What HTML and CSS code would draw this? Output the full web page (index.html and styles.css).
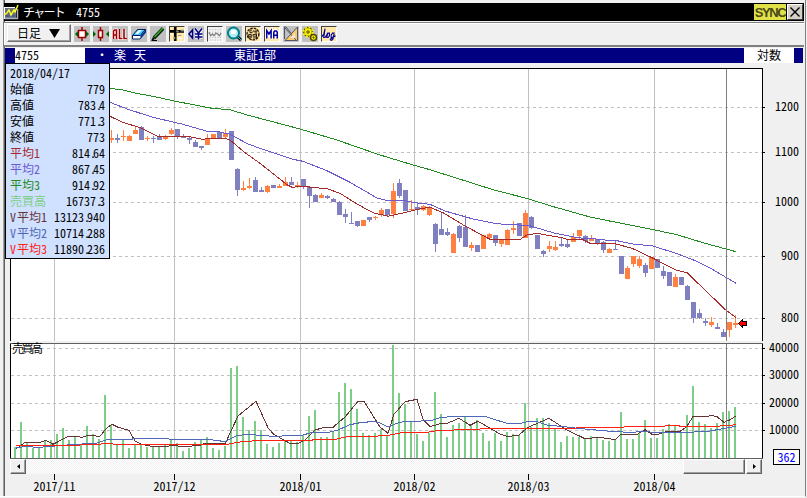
FILE: index.html
```html
<!DOCTYPE html>
<html lang="ja">
<head>
<meta charset="utf-8">
<title>チャート 4755</title>
<link rel="stylesheet" href="styles.css">
</head>
<body>
<div class="window">
  <header class="titlebar">
    <svg class="app-icon" width="16" height="16" viewBox="0 0 16 16"><path d="M1 4h11v11h-11z" fill="#687080"/><path d="M1 3.500h10M.5 3v12" stroke="#fff"/><path d="M1 14.500h12.500V5" fill="none" stroke="#aab0bb" stroke-width="1.500"/><path d="M2 12h9M2 9h9" stroke="#3848a0"/><path d="M0 11l3-2 2-3 2 5 3-5 1 2 3-7" fill="none" stroke="#ffff20" stroke-width="1.500"/></svg>
    <span class="title-name">チャート</span><span class="title-code">4755</span>
    <span class="sync">SYNC</span>
    <span class="close"><svg width="12" height="12" viewBox="0 0 12 12"><path d="M1.500 1.500l9 9M10.500 1.500l-9 9" stroke="#000" stroke-width="1.400"/></svg></span>
  </header>

  <nav class="toolbar">
    <div class="period"><span>日足</span><svg width="11" height="9" viewBox="0 0 12 9" preserveAspectRatio="none"><path d="M0 0h12L6 9z"/></svg></div>
    <div class="tools">
      <svg class="tool" viewBox="0 0 16 16"><path d="M8 1v14" stroke="#a00000" stroke-width="1.500"/><path d="M4.500 4.500h7v7h-7z" fill="#fff" stroke="#a00000" stroke-width="1.500"/><path d="M4 5v6L1 8zM12 5v6l3-3z" fill="#006000"/></svg>
      <svg class="tool" viewBox="0 0 16 16"><path d="M7.500 1v14" stroke="#a00000" stroke-width="1.500"/><path d="M5.500 4.500h4v7h-4z" fill="#fff" stroke="#a00000" stroke-width="1.500"/><path d="M0 5v6l3-3zM16 5v6l-3-3z" fill="#006000"/></svg>
      <svg class="tool" viewBox="0 0 16 16"><path d="M1.500 13V5l1-1h2v9M1.500 9h3M7.500 3.500v9h3M12 3.500v9h3" fill="none" stroke="#fff" stroke-width="3"/><path d="M1.500 13V5l1-1h2v9M1.500 9h3M7.500 3v9.500h3M12 3v9.500h3" fill="none" stroke="#a00000" stroke-width="1.600"/></svg>
      <svg class="tool" viewBox="0 0 16 16"><path d="M1.500 9.500l5-6h8l-5 6z" fill="#30c8f8" stroke="#002060"/><path d="M1.500 9.500v3.500h7.500l5.500-6.500v-3l-5 6z" fill="#fff" stroke="#002060"/><path d="M9.500 10l5-6v2.500l-5 6z" fill="#0030a0"/><path d="M4 8l4-4h3L7 8z" fill="#fff"/></svg>
      <svg class="tool" viewBox="0 0 16 16"><path d="M4 12L13 2.500" stroke="#002000" stroke-width="3.500"/><path d="M4.500 11L13 2" stroke="#30a030" stroke-width="1.800"/><path d="M1 15l2-4 2 2z"/><path d="M2 14.500h5" stroke="#000"/></svg>
      <svg class="tool on" viewBox="0 0 16 16"><path d="M0 5h16M6 0v16" stroke="#000" stroke-width="3"/><path d="M7 5h3M12 4h4" stroke="#888" stroke-width="2"/><path d="M4 11h2v3H4zM9 9h4v1H9z" fill="#888"/><path d="M1 8h2M9 13h5" stroke="#fff" stroke-width="2"/></svg>
      <svg class="tool" viewBox="0 0 16 16"><path d="M1 8l3.500-4v8z" fill="#fff" stroke="#000080" stroke-width="1.500"/><path d="M7 3l3.500 4L14 3M10.500 7v6.500M7 8h7.500M7 11h7.500" fill="none" stroke="#fff" stroke-width="3"/><path d="M7 2.500l3.500 4.500L14 2.500M10.500 7v6.500M7 8h7.500M7 11h7.500" fill="none" stroke="#000080" stroke-width="1.600"/></svg>
      <svg class="tool faded" viewBox="0 0 16 16"><path d="M2 3h13M2 6h13M2 12h13M2 15h13" stroke="#aaa" stroke-dasharray="1 2"/><path d="M1 6l2 4 2-2 2 2 2-3 2 1 2 2 2-3" fill="none" stroke="#808080" stroke-width="1.500"/></svg>
      <svg class="tool" viewBox="0 0 16 16"><path d="M11 10l4 4" stroke="#000" stroke-width="3"/><path d="M12 11l3 3" stroke="#00d0d0"/><circle cx="7.500" cy="7" r="5.500" fill="#b0f0f8" stroke="#008088" stroke-width="2"/><path d="M5 4h5v4H5z" fill="#fff"/></svg>
      <svg class="tool on" viewBox="0 0 16 16"><circle cx="8" cy="8" r="6.800" fill="#f5dfa0" stroke="#201000" stroke-width="1.500" stroke-dasharray="3 1"/><path d="M7 3.500H4.500v3H7v-1.500M9 3.500v2h3M11.500 3v5M3 8.500h3v4H3zM3 10.500h3M8 8.500h4v2H8zM12 8.500v4H8" fill="none" stroke="#201000"/></svg>
      <svg class="tool on" viewBox="0 0 16 16"><path d="M2 13V4l2.500 4L7 4v9M10 13V6l2-2 2 2v7M10 9h4" fill="none" stroke="#fff" stroke-width="3.500"/><path d="M2 13V4l2.500 4L7 4v9M10 13V6l1-1.500h2L14 6v7M10 9.500h4" fill="none" stroke="#0000a0" stroke-width="1.700"/></svg>
      <svg class="tool" viewBox="0 0 16 16"><path d="M14 2v12H2z" fill="#ffc868"/><path d="M14.500 1v13.500H2zM2 2l11 12M1.500 1v12M1 1h2l5 6" fill="none" stroke="#505868"/><path d="M12 7v5H7z" fill="#e8e8e8"/></svg>
      <svg class="tool" viewBox="0 0 16 16"><circle cx="6" cy="6" r="4.300" fill="#f8f000" stroke="#504800" stroke-width="1.300"/><circle cx="6" cy="6" r="4.600" fill="none" stroke="#f8f000" stroke-width="1.800" stroke-dasharray="2 1.600"/><circle cx="11.500" cy="11.500" r="3" fill="#f8f000" stroke="#504800" stroke-width="1.500"/><path d="M5 5h2v2H5zM11 11h1v1h-1z" fill="#fff" stroke="#504800"/></svg>
      <svg class="tool on" viewBox="0 0 16 16"><path d="M0 11l2-3 1.500-6L2 12h1.500l2-3 1-2h2v3l-1.500 2H5.500l1-5M14.500 7h-2.500l-1.500 2v3h2l1.500-4-1.500 6-2 1.500-1-1.500 3-2 3-2" fill="none" stroke="#0000a0" stroke-width="1.300"/></svg>
    </div>
  </nav>

  <div class="infobar">
    <span class="code">4755</span><span class="dot">・</span><span class="name">楽 天</span><span class="market">東証1部</span><span class="scale">対数</span>
  </div>

  <main class="chart">
    <div class="plot-column">
      <svg class="plot" width="760" height="396" viewBox="5 63 760 396" shape-rendering="crispEdges">
        <path d="M10 68h753v273H10z" fill="#fff"/>
        <path d="M10 343h753v116H10z" fill="#fff"/>
        <g id="grid"></g>
        <g id="volume"></g>
        <g id="candles"></g>
        <g id="lines"></g>
        <path class="cursor" d="M726.500 69v389"/>
        <path class="gap" d="M11 341h751v2H11z"/>
        <path class="frame" d="M10 68.500h753M10.500 68v273M762.500 68v273M10.500 343v116M762.500 343v116"/>
        <path class="frame-gray" d="M10 343.500h753M10 458.500h753"/>
        <path d="M738.500 323.500l4-4v2h4v4h-4v2z" fill="#f00" stroke="#000"/>
        <text x="12" y="353" textLength="31">売買高</text>
      </svg>
      <div class="scrollbar">
        <span class="arrow"><svg width="3" height="5" viewBox="0 0 3 5"><path d="M3 0v5L0 2.500z"/></svg></span>
        <span class="thumb"></span>
        <span class="arrow"><svg width="3" height="5" viewBox="0 0 3 5"><path d="M0 0v5l3-2.500z"/></svg></span>
      </div>
      <svg id="dates" width="760" height="22" viewBox="5 474 760 22"></svg>
    </div>
    <div class="value-column">
      <svg id="values" width="40" height="386" viewBox="765 63 40 386"></svg>
      <span class="count">362</span>
    </div>
    <dl class="quote">
      <div><dt>2018/04/17</dt></div>
      <div><dt>始値</dt><dd>779</dd></div>
      <div><dt>高値</dt><dd>783<i>.</i>4</dd></div>
      <div><dt>安値</dt><dd>771<i>.</i>3</dd></div>
      <div><dt>終値</dt><dd>773</dd></div>
      <div><dt class="short">平均1</dt><dd>814<i>.</i>64</dd></div>
      <div><dt class="mid">平均2</dt><dd>867<i>.</i>45</dd></div>
      <div><dt class="long">平均3</dt><dd>914<i>.</i>92</dd></div>
      <div><dt class="vol">売買高</dt><dd>16737<i>.</i>3</dd></div>
      <div><dt class="v1"><b>V</b>平均1</dt><dd>13123<i>.</i>940</dd></div>
      <div><dt class="v2"><b>V</b>平均2</dt><dd>10714<i>.</i>288</dd></div>
      <div><dt class="v3"><b>V</b>平均3</dt><dd>11890<i>.</i>236</dd></div>
    </dl>
  </main>
</div>
<script src="script.js"></script>
</body>
</html>
```
FILE: styles.css
```css
* { box-sizing: border-box; }
body {
  margin: 0;
  width: 807px;
  height: 498px;
  overflow: hidden;
  background: #f0f0f0;
  font: 12px/16px "Noto Sans CJK JP", sans-serif;
  font-feature-settings: "hwid";
  color: #000;
}
svg { display: block; flex: none; }
svg text { font-size: 12px; }

.window {
  width: 806px;
  height: 497px;
  padding: 3px 1px 0 3px;
  border-right: 1px solid #808080;
  border-bottom: 1px solid #fff;
  box-shadow: inset 3px 0 #f0f0f0, inset 4px 0 #a0a0a0, inset 5px 0 #606060;
}

.titlebar {
  display: flex;
  align-items: center;
  height: 18px;
  margin-left: 1px;
  background: #000;
  color: #fff;
}
.title-name { margin-left: 3px; width: 53px; letter-spacing: -1.700px; }
.title-code { flex: 1; }
.sync {
  width: 32px;
  height: 16px;
  margin-right: 1px;
  background: #e0e048;
  color: #484818;
  font: bold 13px/17px "Liberation Sans", sans-serif;
  letter-spacing: -1.400px;
  text-align: center;
}
.close {
  display: grid;
  place-items: center;
  width: 16px;
  height: 16px;
  margin-right: 1px;
  background: #d4d0c8;
  border: 1px solid;
  border-color: #fff #404040 #404040 #fff;
}

.toolbar {
  display: flex;
  height: 25px;
  margin-top: 1px;
  padding: 1px 0 0 3px;
  border: 1px solid #808080;
  border-width: 1px 0 2px 1px;
  box-shadow: inset 1px 1px #fff;
  background: #f0f0f0;
}
.period {
  display: flex;
  align-items: center;
  gap: 8px;
  width: 64px;
  height: 18px;
  padding-left: 9px;
  border: 1px solid;
  border-color: #fff #707070 #707070 #fff;
  box-shadow: inset -1px -1px #a0a0a0;
}
.period span { line-height: 14px; }
.tools { display: flex; gap: 3px; margin: 2px 0 0 3px; }
.tool { width: 16px; height: 16px; background: #c0c0c0; }
.tool.on { background: #ffe8a8; border: 1px solid; border-color: #404040 #fff #fff #404040; }
.tool.faded { background: #f0f0f0; border: 1px solid; border-color: #404040 #fff #fff #404040; }

.infobar {
  display: flex;
  height: 15px;
  margin: 1px 1px 0 2px;
  padding-left: 10px;
  background: #000080;
  color: #fff;
  line-height: 14px;
}
.code { width: 70px; background: #fff; color: #000; }
.dot { width: 29px; padding-left: 11px; }
.name { width: 120px; word-spacing: 2px; }
.market { flex: 1; }
.scale { width: 50px; margin-right: 9px; background: #fff; color: #000; text-align: center; }

.chart {
  position: relative;
  display: flex;
  margin-left: 2px;
}
.plot-column { width: 760px; }
.value-column { width: 38px; }
.cursor { stroke: #808080; }
.gap { fill: #f0f0f0; }
.frame { stroke: #000; fill: none; }
.frame-gray { stroke: #606060; }

.scrollbar {
  display: flex;
  height: 15px;
  margin: 0 3px 0 5px;
  background: repeating-conic-gradient(#f0f0f0 0 25%, #fff 0 50%) 0 0 / 2px 2px;
}
.arrow, .thumb {
  background: #f0f0f0;
  border: 1px solid;
  border-color: #fff #606060 #606060 #fff;
  box-shadow: inset -1px -1px #a0a0a0;
}
.arrow { display: grid; place-items: center; width: 16px; }
.thumb { width: 62px; margin: 0 1px 0 auto; }

.count {
  display: block;
  width: 27px;
  height: 16px;
  margin-left: 8px;
  border: 1px solid #000;
  background: #fff;
  color: #00f;
  line-height: 13px;
  text-align: center;
}

.quote {
  position: absolute;
  left: 0;
  top: 0;
  width: 105px;
  height: 196px;
  margin: 0;
  padding: 1px 4px 0;
  border: 1px solid #000;
  background: #d0e0ff;
}
.quote div { display: flex; justify-content: space-between; height: 16px; }
.quote dd { margin: 0; }
.quote i { font-style: normal; letter-spacing: -3px; }
.quote b { font-weight: normal; letter-spacing: 1px; }
.short { color: #a52a2a; }
.mid { color: #6a5acd; }
.long { color: #228b22; }
.vol { color: #7ccd86; }
.v1 { color: #663333; }
.v2 { color: #5068b8; }
.v3 { color: #ff2010; }
```
FILE: script.js
```js
const markup = (id, html) => { document.getElementById(id).innerHTML = html; };

const months = [[54, '2017/11'], [174, '2017/12'], [300, '2018/01'], [414, '2018/02'], [528, '2018/03'], [654, '2018/04']];
const levels = [[107, 1200], [152, 1100], [202, 1000], [256, 900], [318, 800], [348, 40000], [375, 30000], [403, 20000], [430, 10000]];

markup('grid',
  levels.map(([y]) => `<path d="M11 ${y}.5H762" stroke="#c0c0c0" stroke-dasharray="3 3"/><path d="M762 ${y}.5h3" stroke="#000"/>`).join('') +
  months.map(([x]) => `<path d="M${x}.5 69V458" stroke="#c0c0c0"/>`).join(''));
markup('dates', months.map(([x, t]) =>
  `<path d="M${x}.5 474v6" stroke="#000" shape-rendering="crispEdges"/><text x="${x + 0.5}" y="491" text-anchor="middle">${t}</text>`).join(''));
markup('values', levels.map(([y, t]) => `<text x="799" y="${y + 4}" text-anchor="end">${t}</text>`).join(''));

// Each session: high, body top, body bottom, low (in thirds of a pixel below the section base), u = up, d = down.
const sections = [
  { x: 111, base: 65, rows: `u195,219,225,234 d207,219,225,234 u195,213,216,227 u210,213,228,228 u185,195,207,207 d183,186,224,224
    u213,219,222,227 d213,219,222,234 d207,213,224,224 u210,216,222,225 u189,195,207,210 d192,192,215,221 d207,213,219,219
    d216,219,224,237 d225,231,246,246 d243,243,248,255 u207,219,240,240 u207,207,222,222 d201,201,220,222 u192,204,216,222
    d198,198,285,285 d308,311,375,393 u347,369,375,378 u339,363,369,372 d336,345,381,381` },
  { x: 261, base: 140, rows: `d141,150,156,156 u135,138,156,159 d135,135,144,144 u132,138,144,144 u111,126,138,138 d111,126,135,135
    u126,135,140,144 d117,117,141,147 d141,141,168,204 d162,165,186,186 u159,165,174,174 d165,168,174,177 d174,177,186,186
    d183,186,225,225 d207,222,231,249 d216,249,252,252 d243,243,258,261 u240,240,258,258 d231,231,240,246 u228,231,234,240
    u204,210,225,230 d207,207,225,231 u129,153,222,234 d117,129,168,174 d150,150,213,213 u180,207,210,213 d189,201,210,224` },
  { x: 423, base: 190, rows: `u45,48,60,63 u48,51,75,78 d99,102,162,186 d66,117,135,135 d114,126,135,138 u129,132,189,189
    d105,108,144,156 d75,111,171,171 u156,165,174,183 d165,165,186,186 u135,135,177,177 u129,132,144,147 d135,135,159,168
    u150,150,162,171 u117,120,165,165 u93,114,120,132 d99,99,138,138 u60,69,144,144 d78,81,114,117 d135,135,177,177
    d180,183,192,201 u153,168,177,186 u153,171,180,183 d144,162,168,171 d150,162,171,174 u129,141,156,156 u120,120,138,150` },
  { x: 585, base: 220, rows: `d45,48,63,68 u45,54,63,63 d57,57,72,75 d63,66,90,99 u84,87,99,99 d63,87,90,90 d108,108,162,162
    u138,144,177,177 u108,108,132,141 u108,117,138,144 d129,135,159,171 u111,111,147,147 d117,117,144,144 d138,153,168,177
    d156,156,198,198 u162,171,201,201 d171,171,195,195 d195,198,240,240 d246,246,294,309 d267,279,294,297 d294,303,309,318
    u291,306,315,321 d309,321,327,327 d327,336,351,351 u306,306,330,351 u285,309,315,324` }
];
markup('candles', sections.map(({ x, base, rows }) => rows.trim().split(/\s+/).map((row, i) => {
  const [high, top, bottom, low] = row.slice(1).split(',').map(v => base + Math.round(v / 3));
  const cx = x + i * 6;
  return `<path fill="${row[0] === 'u' ? '#ff8040' : '#8080c0'}" d="M${cx} ${high}h1V${low}h-1zM${cx - 2} ${top}h5V${bottom}h-5z"/>`;
}).join('')).join(''));

// Bar tops, same thirds unit, below y = 335.
const bars = [336,261,321,339,339,315,315,297,279,315,303,330,273,297,312,180,270,327,315,339,330,327,336,333,336,330,315,324,348,339,321,315,306,
  339,345,333,99,93,246,285,258,285,327,336,324,315,318,322,300,243,225,306,306,288,171,144,162,222,294,300,294,282,303,30,174,207,261,
  297,318,294,171,237,306,270,264,243,270,255,294,318,294,318,291,297,300,204,276,249,249,264,279,321,303,306,306,309,303,309,315,318,
  315,231,312,312,294,255,309,309,282,267,273,291,240,153,261,267,279,264,231,228,216];
markup('volume', bars.map((t, i) => {
  const y = 335 + Math.round(t / 3);
  return `<rect x="${14 + i * 6}" y="${y}" width="2" height="${458 - y}" fill="#7ccd86"/>`;
}).join(''));

const lines = [
  ['#228b22', '110,88.3 123,90 135,93 158,97.3 174,101 212,108.3 230,109.7 248,115.3 265,119.7 300,129 337,140 377,154 414,165.3 430,169.7 494,190 528,198.7 552,206.3 590,217 607,220.500 655,230 677,234.7 705,243.3 736,251.7'],
  ['#6a5acd', '110,102.3 128,109.3 152,117 174,122.3 183,124.3 207,131.3 220,132 230,134.3 248,144 260,148.3 293,159.3 303,161.3 327,170.7 350,182.3 377,198 387,200.4 403,200.4 415,202.7 430,204.3 445,211 473,219 497,223.7 510,224.7 528,225.3 535,227.3 553,232.7 570,236.3 585,238.7 594,238.7 600,239.7 617,240.7 633,244 653,246 677,253.7 697,261.3 713,269.7 736,283.3'],
  ['#a52a2a', '110,116.3 122,122 142,128.3 158,136.7 188,136.4 202,139.3 212,138.3 225,138.3 230,140 245,152.7 260,163.3 287,184.7 292,187.3 303,186.3 328,189 340,193.3 357,204 373,212.7 388,216.3 403,213 420,208.7 430,207.3 443,212.7 465,226 490,239.3 520,239.5 527,235 538,233.3 547,235.3 560,237.3 570,240 583,239.7 590,243.3 613,243.2 632,248.3 652,257.7 675,269.7 687,272.7 725,309.3 736,317.7'],
  ['#663333', '16,449 25,442.4 40,442.4 46,440.3 53,444.3 67,437 75,436 82,437.3 88,435.4 100,436.3 106,428.7 112,424.3 118,427.3 129,430.3 135,441 142,444.3 152,446.4 167,446.4 173,445.4 183,446.7 200,445.4 205,443.4 225,444 238,416 256,401.3 268,427.7 273,433.7 285,440.7 290,443.4 298,443.4 305,440 315,430 322,428 333,427.3 345,417 358,401.3 364,401.3 380,427 388,433.3 394,414.3 405,401.7 417,399.3 423,419.3 430,426.7 440,423.7 448,423 459,418.3 470,425.3 478,421.3 500,434 507,436.3 518,435.7 528,427.3 549,418.3 567,430 585,438.7 600,437.3 615,439.7 621,434.4 637,434.4 645,429.7 652,434.4 658,434.4 667,431.5 680,431.5 687,426.3 693,416.4 707,416.4 712,415.4 717,416.7 724,422.3 729,420.3 736,416'],
  ['#5068b8', '16,447.6 28,446.4 37,447.6 50,446.4 67,445 97,443 108,439.4 132,439.4 133,438.4 168,438.4 170,439.6 210,439.6 225,441.6 237,435.6 248,434.4 273,436.3 302,435.3 312,432.4 328,432.4 338,430 350,424.7 362,422.3 375,421.6 380,423 388,427 397,423.3 405,421.4 415,421.4 432,420.3 440,417.6 455,416.4 485,416.4 507,423.4 520,423.4 528,421.5 537,421.6 547,425 567,427 577,428.3 610,431.3 630,432.4 643,431.6 657,432.4 688,432.4 710,431 725,428.3 736,426.3'],
  ['#ff2010', '16,445.6 70,445.4 96,444.4 107,443.5 117,444.4 227,444.4 242,441.6 260,440.5 312,440.5 313,439.4 335,439.4 348,436.5 372,436.4 388,435.4 403,432.5 427,432.4 438,430.4 478,429.4 482,428.4 575,428.4 577,427.4 623,427.4 625,426.5 664,426.5 666,425.5 679,425.5 680,426.5 718,426.5 722,425.4 732,425.4 736,424']
];
markup('lines', lines.map(([color, points]) => `<polyline points="${points}" fill="none" stroke="${color}"/>`).join(''));
```
